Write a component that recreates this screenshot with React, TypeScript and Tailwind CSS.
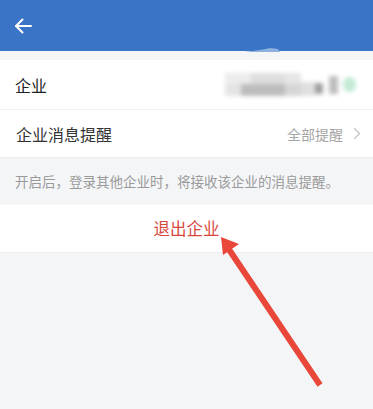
import React from 'react';

const font = { fontFamily: '"Noto Sans CJK SC", "Noto Sans", sans-serif' };

const BackIcon = () => (
  <svg width="20" height="20" viewBox="0 0 20 20" fill="none" stroke="white" strokeWidth="2" strokeLinecap="round" strokeLinejoin="round">
    <path d="M18 10H3" />
    <path d="M9.5 3.5L3 10l6.5 6.5" />
  </svg>
);

const Chevron = () => (
  <svg width="8" height="13" viewBox="0 0 8 13" fill="none" stroke="#c4c4c4" strokeWidth="1.3" strokeLinecap="round" strokeLinejoin="round">
    <path d="M1.5 1.5l5 5-5 5" />
  </svg>
);

// blurred, pixelated account name
const BlurredValue = () => (
  <div className="ml-auto mr-[17px] flex items-center blur-[2px]">
    <div className="flex flex-col">
      <div className="flex">
        <div className="w-[26px] h-[11px] bg-[#ececec]" />
        <div className="w-[34px] h-[11px] bg-[#dedede]" />
        <div className="w-[16px] h-[11px] bg-[#e6e6e6]" />
      </div>
      <div className="flex">
        <div className="w-[16px] h-[12px] bg-[#e4e4e4]" />
        <div className="w-[44px] h-[12px] bg-[#bcbcbc]" />
        <div className="w-[16px] h-[12px] bg-[#d6d6d6]" />
      </div>
    </div>
    <div className="ml-[0px] w-[14px] h-[14px] mt-[8px] bg-[#e0e0e0]" />
    <div className="w-[8px] h-[11px] mt-[8px] bg-[#9f9f9f]" />
    <div className="ml-[6px] w-[9px] h-[18px] bg-[#bdbdbd]" />
    <div className="ml-[5px] w-[13px] h-[15px] rounded-full bg-[#c3ead5]" />
  </div>
);

export default function App() {
  return (
    <div className="relative w-[373px] h-[409px] overflow-hidden bg-[#f4f5f7]" style={font}>
      <div className="h-[51px] bg-[#3a74c6] flex items-center px-[13px]">
        <BackIcon />
      </div>
      <div className="h-[9px] bg-[#f4f5f7]" />
      <div className="bg-white">
        <div className="h-[50px] flex items-center pl-[15px] border-b border-[#efefef]">
          <span className="text-[16px] text-[#222] leading-none">企业</span>
          <BlurredValue />
        </div>
        <div className="h-[47px] flex items-center pl-[16px] pr-[12px]">
          <span className="text-[16px] text-[#333] leading-none">企业消息提醒</span>
          <span className="ml-auto text-[14px] text-[#a6a6a6] leading-none mr-[10px]">全部提醒</span>
          <Chevron />
        </div>
      </div>
      <div className="h-[48px] flex items-center pl-[15px] bg-[#f4f5f7] border-t border-[#eeeeee]">
        <span className="text-[13.5px] text-[#9a9a9a] leading-none whitespace-nowrap">开启后，登录其他企业时，将接收该企业的消息提醒。</span>
      </div>
      <div className="h-[48px] bg-white flex items-center justify-center border-b border-[#eeeeee]">
        <span className="text-[16.5px] text-[#d9473d] leading-none">退出企业</span>
      </div>
      <svg className="absolute left-0 top-0 pointer-events-none" width="373" height="409" viewBox="0 0 373 409">
        <path d="M244 52Q262 50 270 48L278 49L280 52Z" fill="#8eb0dd" />
        <path d="M320 385L228 248" stroke="#e8473a" strokeWidth="6" strokeLinecap="butt" />
        <path d="M221 237L239 244L223 255Z" fill="#e8473a" />
      </svg>
    </div>
  );
}
